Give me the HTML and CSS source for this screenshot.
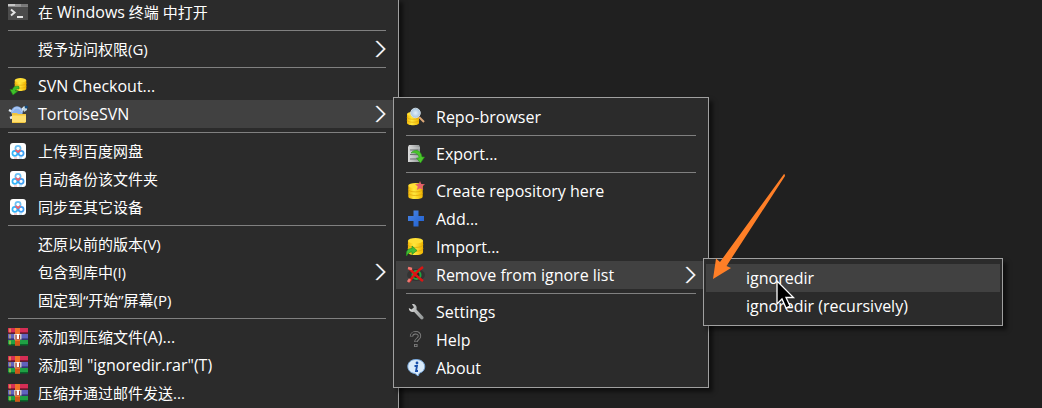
FILE: index.html
```html
<!DOCTYPE html>
<html lang="zh-CN">
<head>
<meta charset="utf-8">
<title>TortoiseSVN</title>
<link rel="stylesheet" href="styles.css">
</head>
<body>
<svg class="defs" aria-hidden="true">
  <defs>
    <linearGradient id="gold" x1="0" x2="1"><stop offset="0" stop-color="#f3b808"/><stop offset=".4" stop-color="#ffe83e"/><stop offset="1" stop-color="#f0b400"/></linearGradient>
    <linearGradient id="blue" x1="0" y1="0" x2="1" y2="1"><stop offset="0" stop-color="#4a86e6"/><stop offset="1" stop-color="#1f5fcf"/></linearGradient>
    <linearGradient id="steel" x1="0" x2="1"><stop offset="0" stop-color="#dcdcdc"/><stop offset="1" stop-color="#8f9494"/></linearGradient>
    <radialGradient id="glass"><stop offset="0" stop-color="#e2effa"/><stop offset="1" stop-color="#a6c4df"/></radialGradient>
    <symbol id="i-db" viewBox="0 0 18 20">
      <path d="M1 4v12c0 4 16 4 16 0V4z" fill="url(#gold)"/>
      <ellipse cx="9" cy="4" rx="8" ry="3" fill="#ffdf35"/>
      <path d="M1 8c0 4 16 4 16 0M1 12c0 4 16 4 16 0" fill="none" stroke="#dfa208" stroke-width=".8"/>
    </symbol>
    <symbol id="i-chevron" viewBox="0 0 12 18">
      <path d="M1.500 1l8 8-8 8" fill="none" stroke="#3f9cf0" stroke-width="1"/>
      <path d="M3.500 1l8 8-8 8" fill="none" stroke="#d98f45" stroke-width="1"/>
      <path d="M2.500 1l8 8-8 8" fill="none" stroke="#fff" stroke-width="1.400"/>
    </symbol>
    <symbol id="i-pan" viewBox="0 0 20 20">
      <rect x="2" y="2" width="16" height="16" rx="3" fill="#fff"/>
      <g fill="none" stroke-width="1.700"><circle cx="10" cy="7.500" r="2.600" stroke="#6cc0f5"/><circle cx="6.900" cy="12.300" r="2.500" stroke="#35b4f8"/><circle cx="13.100" cy="12.300" r="2.500" stroke="#3fa0f5"/><path d="M7.500 8.800L10 11l2.500-2.200" stroke="#f4606c"/></g>
      <path d="M6 17h3" stroke="#f5a3a8" stroke-width="1"/><path d="M11 17h3" stroke="#9bd4fa" stroke-width="1"/>
    </symbol>
    <symbol id="i-rar" viewBox="0 0 20 20">
      <path d="M0 1h20v5H0z" fill="#d52e55"/><path d="M0 5h20v1.500H0z" fill="#8e1838"/>
      <path d="M0 7h20v5H0z" fill="#6062bd"/><path d="M0 11.300h20v1.500H0z" fill="#393b85"/>
      <path d="M0 13h20v5H0z" fill="#20a044"/><path d="M0 17h20v1.500H0z" fill="#08662a"/>
      <path d="M2 1.500v4M2 7.500v4M2 13.500v4" stroke="#f3d34b"/>
      <path d="M7 1h5v17.500H7z" fill="#f07328"/><path d="M7 14h5v4.500H7z" fill="#d15618"/>
      <path d="M6 7h7.500v5.500H6z" fill="#c9c5c3"/><path d="M7.500 8h4.500v4.500H7.500z" fill="#a93c24"/><path d="M8.700 7h2.300v5H8.700z" fill="#fff"/>
    </symbol>
  </defs>
</svg>

<nav class="menu menu-main" aria-label="文件夹">
  <button class="item"><svg class="icon" viewBox="0 0 20 20"><path d="M0 2h20v16H0z" fill="#4c4c4c"/><path d="M0 2h20v2.500H0z" fill="#c6c6c6"/><path d="M7 2h6v2.500H7z" fill="#999"/><path d="M13 2h7v2.500h-7z" fill="#777"/><path d="M3 7.500l3.500 3L3 13.500" fill="none" stroke="#e3e3e3" stroke-width="2"/><path d="M9 15h6" stroke="#e8e8e8" stroke-width="2"/></svg><span>在 <span class="latin">Windows</span> 终端 中打开</span></button>
  <hr class="rule">
  <button class="item"><span class="icon"></span><span>授予访问权限(G)</span><svg class="chevron"><use href="#i-chevron"/></svg></button>
  <hr class="rule">
  <button class="item"><svg class="icon" viewBox="0 0 20 20"><use href="#i-db" x="6" y="1" width="13" height="15"/><path d="M11 10.500c-3-1-6 0-6.500 3H2l3 5.500 5-4H7.500c.5-2 1.500-2.500 3.500-2z" fill="#3fc02a" stroke="#1c8a16" stroke-width=".6"/></svg><span class="latin">SVN Checkout...</span></button>
  <button class="item item-active"><svg class="icon" viewBox="0 0 20 20"><path d="M1 6l4 2M2 14l3-1M12 8l5-5" stroke="#e4eef6" stroke-width="2.500"/><circle cx="9" cy="8" r="5.800" fill="#8db4ee"/><path d="M4 8l3-4 4 0 3 4" stroke="#b9cff2" fill="none"/><path d="M15 4l4-2v4l-3 2z" fill="#bed4df"/><circle cx="18.300" cy="3" r="1.600" fill="#124b7e"/><path d="M4 9h5l1 1h8v8l-1 1H4z" fill="#f2c53d"/><path d="M4 11.500h14V18H4z" fill="#ffe070"/></svg><span class="latin">TortoiseSVN</span><svg class="chevron"><use href="#i-chevron"/></svg></button>
  <hr class="rule">
  <button class="item"><svg class="icon"><use href="#i-pan"/></svg><span>上传到百度网盘</span></button>
  <button class="item"><svg class="icon"><use href="#i-pan"/></svg><span>自动备份该文件夹</span></button>
  <button class="item"><svg class="icon"><use href="#i-pan"/></svg><span>同步至其它设备</span></button>
  <hr class="rule">
  <button class="item"><span class="icon"></span><span>还原以前的版本(V)</span></button>
  <button class="item"><span class="icon"></span><span>包含到库中(I)</span><svg class="chevron"><use href="#i-chevron"/></svg></button>
  <button class="item"><span class="icon"></span><span>固定到“开始”屏幕(P)</span></button>
  <hr class="rule">
  <button class="item"><svg class="icon"><use href="#i-rar"/></svg><span>添加到压缩文件<span class="latin">(A)...</span></span></button>
  <button class="item"><svg class="icon"><use href="#i-rar"/></svg><span>添加到 <span class="latin">"ignoredir.rar"(T)</span></span></button>
  <button class="item"><svg class="icon"><use href="#i-rar"/></svg><span>压缩并通过邮件发送...</span></button>
</nav>

<nav class="menu popup popup-svn latin" aria-label="TortoiseSVN">
  <button class="item"><svg class="icon" viewBox="0 0 20 20"><use href="#i-db" x="0" y="4" width="14" height="15"/><path d="M13 10l5 5" stroke="#dca878" stroke-width="2"/><circle cx="9.500" cy="6" r="4.800" fill="url(#glass)" stroke="#ccd9e2" stroke-width="1"/></svg><span>Repo-browser</span></button>
  <hr class="rule">
  <button class="item"><svg class="icon" viewBox="0 0 20 20"><path d="M3 1h10l1 2v15H2V3z" fill="url(#steel)"/><path d="M4 6h8M4 10.500h8M4 15h8" stroke="#6c7272" stroke-width="1.200"/><path d="M2 4h12M2 8.500h12M2 13h12" stroke="#d8dcdc" stroke-width=".6"/><path d="M5 9c3-4 10-3.500 11 4h2.500l-4 6-4-5H13c0-4-4-6-8-5z" fill="#4cc52b" stroke="#259a18" stroke-width=".6"/></svg><span>Export...</span></button>
  <hr class="rule">
  <button class="item"><svg class="icon" viewBox="0 0 20 20"><use href="#i-db" x="1" y="1" width="17" height="18"/><path d="M14 0l1.300 3 3.700.2-2.800 2.400 1 3.400-3.200-1.800L10.800 9l1-3.400L9 3.200l3.700-.2z" fill="#e5606a"/></svg><span>Create repository here</span></button>
  <button class="item"><svg class="icon" viewBox="0 0 20 20"><path d="M7.500 1.500h5v5.500H18v5h-5.500v5.500h-5V12H2V7h5.500z" fill="url(#blue)"/></svg><span>Add...</span></button>
  <button class="item"><svg class="icon" viewBox="0 0 20 20"><use href="#i-db" x="1" y="0" width="17" height="19"/><path d="M.5 19c-1-5 1.500-7.500 5.500-7.500V9l5 4.500-5 4v-2.500c-2.500 0-4 1.500-5.500 4z" fill="#42bd36" stroke="#1c8b1b" stroke-width=".6"/></svg><span>Import...</span></button>
  <button class="item item-active"><svg class="icon" viewBox="0 0 20 20"><ellipse cx="10" cy="10" rx="9" ry="6" fill="#333"/><circle cx="10.500" cy="10" r="4" fill="#222" stroke="#1fa53f" stroke-width="2"/><path d="M3 3c4 4 8 9 14 13M17 2C11 6 7 11 3 17" fill="none" stroke="#dc1513" stroke-width="2.600"/><path d="M2 3l4 1M4 14l-2 3" stroke="#ef7770" stroke-width="2.500"/></svg><span>Remove from ignore list</span><svg class="chevron"><use href="#i-chevron"/></svg></button>
  <hr class="rule">
  <button class="item"><svg class="icon" viewBox="0 0 20 20"><path d="M6 2.200c2.500-.5 5.500 1.500 4.500 5.300l7 7.500c.6 2-1.500 3-2.700 2L8 9.700c-2.500 1-5.200-.7-5.200-3.700L5.500 7.500 8 5.300z" fill="url(#steel)"/></svg><span>Settings</span></button>
  <button class="item"><svg class="icon" viewBox="0 0 20 20"><path d="M5.500 6.500c0-5 8-5 8-.5 0 3-3.600 3-3.600 6M9.800 14v3" fill="none" stroke="#858585" stroke-width="3.400"/><path d="M5.500 6.100c0-4.600 8-4.600 8-.1 0 3-3.600 3-3.600 5.400M9.800 14.800v1.400" fill="none" stroke="#303030" stroke-width="1.700"/></svg><span>Help</span></button>
  <button class="item"><svg class="icon" viewBox="0 0 20 20"><path d="M10 1.500c11 0 11 12 3.500 13.500L12 18l-3-2.500C-1 14.500-.5 1.500 10 1.500z" fill="#d8eafa" stroke="#78a8dc" stroke-width="1"/><path d="M8.500 8H11l-1 5h2" fill="none" stroke="#174eaa" stroke-width="1.800"/><circle cx="11" cy="5" r="1.400" fill="#174eaa"/></svg><span>About</span></button>
</nav>

<nav class="menu popup popup-ignore latin" aria-label="Remove from ignore list">
  <button class="item item-active"><span class="icon"></span><span>ignoredir</span></button>
  <button class="item"><span class="icon"></span><span>ignoredir (recursively)</span></button>
</nav>

<svg class="arrow" viewBox="0 0 74 106" aria-hidden="true"><path d="M72 1q1 0 1 2L14.500 93l4.500 2L1 106 4 85.500 8 89z" fill="#ff7f27"/></svg>
<svg class="pointer" viewBox="0 0 20 30" aria-hidden="true"><path d="M1 1v23l5-5 4 9 4-2-4-8.500h7.500z" fill="#000" stroke="#fff" stroke-width="1.300"/></svg>
</body>
</html>
```
FILE: styles.css
```css
* { box-sizing: border-box; }

body {
  margin: 0;
  min-height: 100vh;
  background: #202020;
  overflow: hidden;
  color: #fff;
  font: 15px/20px "Open Sans", "Noto Sans CJK SC", sans-serif;
}

.latin { font-size: 16px; }

.defs { position: absolute; width: 0; height: 0; }

.menu {
  display: flex;
  flex-direction: column;
  background: #2b2b2b;
  border: 1px solid #a0a0a0;
  box-shadow: 4px 4px 4px rgba(0, 0, 0, .5);
}

.menu-main {
  width: 399px;
  margin-top: -2px;
  padding-bottom: 5px;
  border-width: 0 1px 0 0;
}

.popup {
  position: absolute;
  padding: 5px 2px;
}

.popup-svn { left: 393px; top: 97px; width: 316px; }
.popup-ignore { left: 703px; top: 258px; width: 300px; }

.item {
  display: flex;
  align-items: center;
  gap: 10px;
  height: 28px;
  padding: 0 10px;
  border: 0;
  background: none;
  color: inherit;
  font: inherit;
  text-align: left;
  white-space: nowrap;
}

.menu-main .item { padding: 0 12px 0 8px; }

.item-active,
.menu-main .item-active { background: #414141; }

.icon { flex: none; width: 20px; height: 20px; }

.chevron { width: 12px; height: 18px; margin-left: auto; }

.rule {
  width: auto;
  height: 1px;
  margin: 4px 10px;
  border: 0;
  background: #808080;
}

.menu-main .rule { margin: 4px 12px 4px 8px; }

.arrow { position: absolute; left: 712px; top: 173px; width: 74px; height: 106px; }
.pointer { position: absolute; left: 776px; top: 280px; width: 20px; height: 30px; }
```
